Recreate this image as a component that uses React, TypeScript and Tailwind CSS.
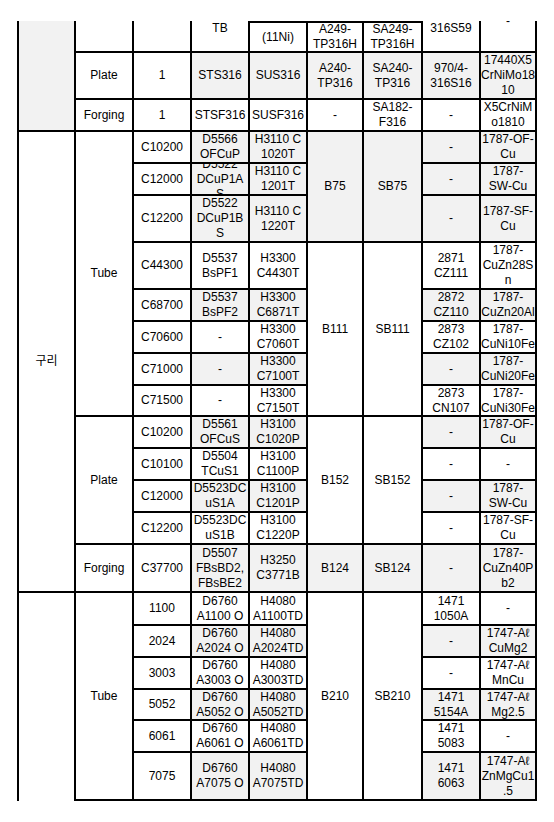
type Cell = {
  t: string[];
  g?: boolean; // shaded
  span?: string; // row-span class
  v?: 'top' | 'cut';
  bt?: boolean; // top border
  nb?: boolean; // no bottom border
};

const rows: Cell[][] = [
  // carry-over row from the previous page
  [
    { t: [], g: true, span: 'row-span-3' },
    { t: [] },
    { t: [] },
    { t: ['TB'], v: 'top' },
    { t: ['(11Ni)'], bt: true },
    { t: ['A249-', 'TP316H'], bt: true },
    { t: ['SA249-', 'TP316H'], bt: true },
    { t: ['316S59'], v: 'top' },
    { t: ['-'], v: 'cut' },
  ],
  [
    { t: ['Plate'] },
    { t: ['1'] },
    { t: ['STS316'], g: true },
    { t: ['SUS316'], g: true },
    { t: ['A240-', 'TP316'], g: true },
    { t: ['SA240-', 'TP316'], g: true },
    { t: ['970/4-', '316S16'], g: true },
    { t: ['17440X5', 'CrNiMo18', '10'], g: true },
  ],
  [
    { t: ['Forging'] },
    { t: ['1'] },
    { t: ['STSF316'] },
    { t: ['SUSF316'] },
    { t: ['-'] },
    { t: ['SA182-', 'F316'] },
    { t: ['-'] },
    { t: ['X5CrNiM', 'o1810'] },
  ],
  // 구리
  [
    { t: ['구리'], span: 'row-span-13' },
    { t: ['Tube'], span: 'row-span-8' },
    { t: ['C10200'] },
    { t: ['D5566', 'OFCuP'], g: true },
    { t: ['H3110 C', '1020T'], g: true },
    { t: ['B75'], g: true, span: 'row-span-3' },
    { t: ['SB75'], g: true, span: 'row-span-3' },
    { t: ['-'], g: true },
    { t: ['1787-OF-', 'Cu'], g: true },
  ],
  [
    { t: ['C12000'] },
    { t: ['D5522', 'DCuP1A', 'S'], g: true },
    { t: ['H3110 C', '1201T'], g: true },
    { t: ['-'], g: true },
    { t: ['1787-', 'SW-Cu'], g: true },
  ],
  [
    { t: ['C12200'] },
    { t: ['D5522', 'DCuP1B', 'S'], g: true },
    { t: ['H3110 C', '1220T'], g: true },
    { t: ['-'], g: true },
    { t: ['1787-SF-', 'Cu'], g: true },
  ],
  [
    { t: ['C44300'] },
    { t: ['D5537', 'BsPF1'] },
    { t: ['H3300', 'C4430T'] },
    { t: ['B111'], span: 'row-span-5' },
    { t: ['SB111'], span: 'row-span-5' },
    { t: ['2871', 'CZ111'] },
    { t: ['1787-', 'CuZn28S', 'n'] },
  ],
  [
    { t: ['C68700'] },
    { t: ['D5537', 'BsPF2'], g: true },
    { t: ['H3300', 'C6871T'], g: true },
    { t: ['2872', 'CZ110'], g: true },
    { t: ['1787-', 'CuZn20Al'], g: true },
  ],
  [
    { t: ['C70600'] },
    { t: ['-'] },
    { t: ['H3300', 'C7060T'] },
    { t: ['2873', 'CZ102'] },
    { t: ['1787-', 'CuNi10Fe'] },
  ],
  [
    { t: ['C71000'] },
    { t: ['-'], g: true },
    { t: ['H3300', 'C7100T'], g: true },
    { t: ['-'], g: true },
    { t: ['1787-', 'CuNi20Fe'], g: true },
  ],
  [
    { t: ['C71500'] },
    { t: ['-'] },
    { t: ['H3300', 'C7150T'] },
    { t: ['2873', 'CN107'] },
    { t: ['1787-', 'CuNi30Fe'] },
  ],
  [
    { t: ['Plate'], span: 'row-span-4' },
    { t: ['C10200'] },
    { t: ['D5561', 'OFCuS'], g: true },
    { t: ['H3100', 'C1020P'], g: true },
    { t: ['B152'], span: 'row-span-4' },
    { t: ['SB152'], span: 'row-span-4' },
    { t: ['-'], g: true },
    { t: ['1787-OF-', 'Cu'], g: true },
  ],
  [
    { t: ['C10100'] },
    { t: ['D5504', 'TCuS1'] },
    { t: ['H3100', 'C1100P'] },
    { t: ['-'] },
    { t: ['-'] },
  ],
  [
    { t: ['C12000'] },
    { t: ['D5523DC', 'uS1A'], g: true },
    { t: ['H3100', 'C1201P'], g: true },
    { t: ['-'], g: true },
    { t: ['1787-', 'SW-Cu'], g: true },
  ],
  [
    { t: ['C12200'] },
    { t: ['D5523DC', 'uS1B'] },
    { t: ['H3100', 'C1220P'] },
    { t: ['-'] },
    { t: ['1787-SF-', 'Cu'] },
  ],
  [
    { t: ['Forging'] },
    { t: ['C37700'] },
    { t: ['D5507', 'FBsBD2,', 'FBsBE2'], g: true },
    { t: ['H3250', 'C3771B'], g: true },
    { t: ['B124'], g: true },
    { t: ['SB124'], g: true },
    { t: ['-'], g: true },
    { t: ['1787-', 'CuZn40P', 'b2'], g: true },
  ],
  // aluminium, label on the next page
  [
    { t: [], span: 'row-span-6', nb: true },
    { t: ['Tube'], span: 'row-span-6' },
    { t: ['1100'] },
    { t: ['D6760', 'A1100 O'] },
    { t: ['H4080', 'A1100TD'] },
    { t: ['B210'], span: 'row-span-6' },
    { t: ['SB210'], span: 'row-span-6' },
    { t: ['1471', '1050A'] },
    { t: ['-'] },
  ],
  [
    { t: ['2024'] },
    { t: ['D6760', 'A2024 O'], g: true },
    { t: ['H4080', 'A2024TD'], g: true },
    { t: ['-'], g: true },
    { t: ['1747-Aℓ', 'CuMg2'], g: true },
  ],
  [
    { t: ['3003'] },
    { t: ['D6760', 'A3003 O'] },
    { t: ['H4080', 'A3003TD'] },
    { t: ['-'] },
    { t: ['1747-Aℓ', 'MnCu'] },
  ],
  [
    { t: ['5052'] },
    { t: ['D6760', 'A5052 O'], g: true },
    { t: ['H4080', 'A5052TD'], g: true },
    { t: ['1471', '5154A'], g: true },
    { t: ['1747-Aℓ', 'Mg2.5'], g: true },
  ],
  [
    { t: ['6061'] },
    { t: ['D6760', 'A6061 O'] },
    { t: ['H4080', 'A6061TD'] },
    { t: ['1471', '5083'] },
    { t: ['-'] },
  ],
  [
    { t: ['7075'] },
    { t: ['D6760', 'A7075 O'], g: true },
    { t: ['H4080', 'A7075TD'], g: true },
    { t: ['1471', '6063'], g: true },
    { t: ['1747-Aℓ', 'ZnMgCu1', '.5'], g: true },
  ],
];

function TableCell({ cell }: { cell: Cell }) {
  const justify = cell.v ? 'justify-start' : 'justify-center';
  return (
    <div
      className={`flex flex-col items-center overflow-hidden border-r-2 border-black text-center ${justify} ${
        cell.nb ? '' : 'border-b-2'
      } ${cell.bt ? 'border-t-2' : ''} ${cell.g ? 'bg-[#f2f2f2]' : 'bg-white'} ${cell.span ?? ''}`}
    >
      <div className={cell.v === 'cut' ? '-mt-[7px]' : ''}>
        {cell.t.map((line, i) => (
          <div key={i} className="whitespace-nowrap">
            {line}
          </div>
        ))}
      </div>
    </div>
  );
}

export default function App() {
  return (
    <div className="h-[822px] w-[554px] overflow-hidden bg-white pl-[17px] pt-[21px] font-['Liberation_Sans','Noto_Sans_CJK_KR',sans-serif] text-[12px] leading-[15px] text-black">
      <div className="grid w-[520px] grid-cols-[57px_58px_58px_58px_58px_56px_59px_58px_56px] grid-rows-[32px_47px_32px_32px_32px_47px_47px_32px_32px_32px_31px_32px_32px_32px_32px_48px_33px_32px_32px_31px_32px_48px] border-l-2 border-black">
        {rows.flatMap((row, r) =>
          row.map((cell, c) => <TableCell key={`${r}-${c}`} cell={cell} />)
        )}
      </div>
    </div>
  );
}
